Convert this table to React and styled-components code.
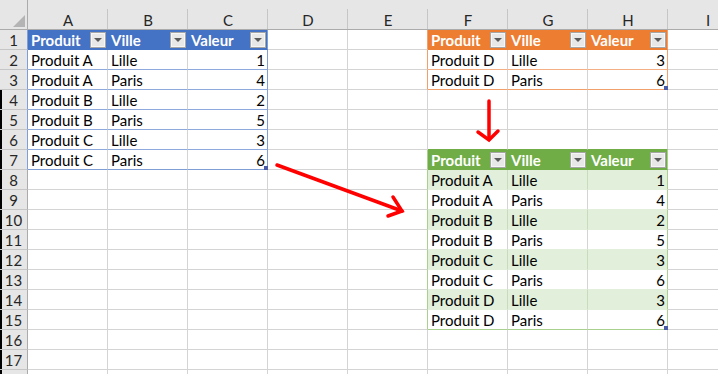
import React from "react";
import styled, { createGlobalStyle } from "styled-components";

const GRID = "#d4d4d4";
const COLS = ["A", "B", "C", "D", "E", "F", "G", "H", "I"];
const ROW_COUNT = 18;
const LABELLED_ROWS = 17;
const HEADS = ["Produit", "Ville", "Valeur"];

const TABLES = [
  {
    c0: 0,
    r0: 1,
    head: "#4472c4",
    line: "#8ea9db",
    edge: "#7f9ed6",
    rows: [
      ["Produit A", "Lille", 1],
      ["Produit A", "Paris", 4],
      ["Produit B", "Lille", 2],
      ["Produit B", "Paris", 5],
      ["Produit C", "Lille", 3],
      ["Produit C", "Paris", 6]
    ]
  },
  {
    c0: 5,
    r0: 1,
    head: "#ed7d31",
    line: "#f4b084",
    edge: "#f1a06c",
    rows: [
      ["Produit D", "Lille", 3],
      ["Produit D", "Paris", 6]
    ]
  },
  {
    c0: 5,
    r0: 7,
    head: "#70ad47",
    band: "#e2efda",
    bandLine: "#c8dcbb",
    edge: "#a9d08e",
    rows: [
      ["Produit A", "Lille", 1],
      ["Produit A", "Paris", 4],
      ["Produit B", "Lille", 2],
      ["Produit B", "Paris", 5],
      ["Produit C", "Lille", 3],
      ["Produit C", "Paris", 6],
      ["Produit D", "Lille", 3],
      ["Produit D", "Paris", 6]
    ]
  }
];

const GlobalStyle = createGlobalStyle`
  html, body {
    margin: 0;
    padding: 0;
    background: #fff;
    overflow: hidden;
  }
  body {
    font-family: Lato, "Liberation Sans", sans-serif;
  }
`;

const Page = styled.div`
  position: relative;
  width: 718px;
  height: 374px;
  overflow: hidden;
`;

const Sheet = styled.div`
  display: grid;
  grid-template-columns: 28px repeat(9, 80px);
  grid-template-rows: 30px repeat(${ROW_COUNT}, 20px);
  font-size: 15px;
`;

const Corner = styled.div`
  box-sizing: border-box;
  background: #e6e6e6;
  border-right: 1px solid #ababab;
  border-bottom: 1px solid #ababab;
  display: flex;
  align-items: flex-end;
  justify-content: flex-end;
  padding: 0 2px 2px 0;
`;

const CornerMark = styled.div`
  width: 0;
  height: 0;
  border-left: 12px solid transparent;
  border-bottom: 12px solid #b4b4b4;
`;

const ColHead = styled.div`
  box-sizing: border-box;
  background-color: #e6e6e6;
  background-image: linear-gradient(#c6c6c6, #c6c6c6);
  background-repeat: no-repeat;
  background-size: 1px 20px;
  background-position: right bottom;
  border-bottom: 1px solid #ababab;
  padding-top: 10px;
  display: flex;
  align-items: center;
  justify-content: center;
  color: #262626;
`;

const RowHead = styled.div`
  box-sizing: border-box;
  background: #e6e6e6;
  border-right: 1px solid ${(p) => p.$edge || "#ababab"};
  border-bottom: 1px solid #c6c6c6;
  box-shadow: ${(p) => (p.$strip ? "inset 2px 0 0 #000" : "none")};
  display: flex;
  align-items: center;
  justify-content: center;
  color: #262626;
`;

const Cell = styled.div`
  box-sizing: border-box;
  position: relative;
  display: flex;
  align-items: center;
  justify-content: ${(p) => (p.$num ? "flex-end" : "space-between")};
  padding: ${(p) => (p.$filter ? "0 1px 0 3px" : "0 2px 0 3px")};
  background: ${(p) => p.$fill};
  color: ${(p) => p.$ink};
  font-weight: ${(p) => (p.$bold ? 700 : 400)};
  border-right: 1px solid ${(p) => p.$right};
  border-bottom: 1px solid ${(p) => p.$bottom};
  white-space: nowrap;
`;

const FilterButton = styled.div`
  box-sizing: border-box;
  width: 16px;
  height: 16px;
  background: #e8e8e8;
  border: 1px solid #a6a6a6;
  box-shadow: inset 0 0 0 1px #f6f6f6;
  display: flex;
  align-items: center;
  justify-content: center;
`;

const Caret = styled.div`
  width: 0;
  height: 0;
  border-left: 4px solid transparent;
  border-right: 4px solid transparent;
  border-top: 4px solid #5a5a5a;
  margin-top: 1px;
`;

const Handle = styled.div`
  position: absolute;
  right: -1px;
  bottom: -1px;
  width: 4px;
  height: 4px;
  background: #4a5ba8;
`;

const Arrows = styled.svg`
  position: absolute;
  left: 0;
  top: 0;
  pointer-events: none;
`;

function cellSpec(r, c) {
  const s = {
    fill: "#fff",
    ink: "#000",
    right: GRID,
    bottom: GRID,
    text: "",
    num: false,
    bold: false,
    filter: false,
    handle: false
  };
  for (const t of TABLES) {
    const last = t.r0 + t.rows.length;
    const inRows = r >= t.r0 && r <= last;
    const inCols = c >= t.c0 && c < t.c0 + 3;
    if (inRows && c === t.c0 - 1) s.right = t.edge;
    if (r === t.r0 - 1 && inCols) s.bottom = t.head;
    if (!inRows || !inCols) continue;
    const k = c - t.c0;
    if (r === t.r0) {
      s.fill = t.head;
      s.ink = "#fff";
      s.bold = true;
      s.filter = true;
      s.text = HEADS[k];
      s.right = k === 2 ? t.edge : t.head;
      s.bottom = t.head;
    } else {
      const i = r - t.r0 - 1;
      const band = t.band && i % 2 === 0;
      s.fill = band ? t.band : "#fff";
      s.text = t.rows[i][k];
      s.num = k === 2;
      s.right = k === 2 ? t.edge : band ? t.bandLine : GRID;
      if (r === last) s.bottom = t.edge;
      else s.bottom = t.line || t.band;
      s.handle = r === last && k === 2;
    }
  }
  return s;
}

function rowEdge(r) {
  const t = TABLES.find((x) => x.c0 === 0 && r >= x.r0 && r <= x.r0 + x.rows.length);
  return t ? t.edge : null;
}

export default function App() {
  const rows = [];
  for (let r = 1; r <= ROW_COUNT; r++) {
    // the last row only peeks in at the bottom edge, its number stays hidden
    rows.push(
      <RowHead key={`h${r}`} $edge={rowEdge(r)} $strip={r >= 4}>
        {r <= LABELLED_ROWS ? r : ""}
      </RowHead>
    );
    COLS.forEach((_, c) => {
      const s = cellSpec(r, c);
      rows.push(
        <Cell
          key={`${r}-${c}`}
          $fill={s.fill}
          $ink={s.ink}
          $bold={s.bold}
          $num={s.num}
          $filter={s.filter}
          $right={s.right}
          $bottom={s.bottom}>
          <span>{s.text}</span>
          {s.filter && (
            <FilterButton>
              <Caret />
            </FilterButton>
          )}
          {s.handle && <Handle />}
        </Cell>
      );
    });
  }

  return (
    <Page>
      <GlobalStyle />
      <Sheet>
        <Corner>
          <CornerMark />
        </Corner>
        {COLS.map((l) => (
          <ColHead key={l}>{l}</ColHead>
        ))}
        {rows}
      </Sheet>
      <Arrows width="718" height="374" viewBox="0 0 718 374">
        <g stroke="#ff0000" strokeWidth="3.5" strokeLinecap="round" fill="none">
          <path d="M277 165 L402 211" />
          <path d="M393 197 L402 211 L388 216" />
          <path d="M489 101 L489 139" />
          <path d="M478 132 L489 140 L498 131" />
        </g>
      </Arrows>
    </Page>
  );
}
